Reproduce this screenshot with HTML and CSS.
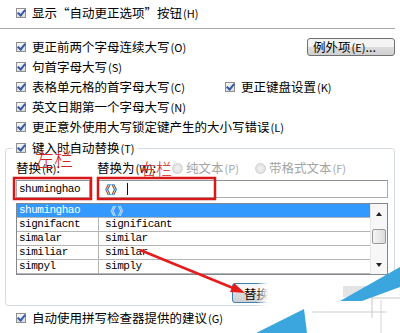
FILE: index.html
```html
<!DOCTYPE html>
<html lang="zh-CN">
<head>
  <meta charset="UTF-8">
  <title>自动更正</title>
  <link rel="stylesheet" href="styles.css">
</head>
<body>

  <div class="dlg">
    <label class="chk row first"><span class="box"></span>显示“自动更正选项”按钮<span class="key">(H)</span></label>
    <div class="sep"></div>

    <div class="row">
      <label class="chk"><span class="box"></span>更正前两个字母连续大写<span class="key">(O)</span></label>
      <button class="btn exc">例外项<span class="key">(E)</span>...</button>
    </div>
    <label class="chk row"><span class="box"></span>句首字母大写<span class="key">(S)</span></label>
    <div class="row">
      <label class="chk col-a"><span class="box"></span>表格单元格的首字母大写<span class="key">(C)</span></label>
      <label class="chk"><span class="box"></span>更正键盘设置<span class="key">(K)</span></label>
    </div>
    <label class="chk row"><span class="box"></span>英文日期第一个字母大写<span class="key">(N)</span></label>
    <label class="chk row"><span class="box"></span>更正意外使用大写锁定键产生的大小写错误<span class="key">(L)</span></label>

    <div class="grp">
      <label class="chk grp-title"><span class="box"></span>键入时自动替换<span class="key">(T)</span></label>

      <div class="labels">
        <span class="lbl-a">替换<span class="key">(R)</span>:</span>
        <span class="lbl-b">替换为<span class="key">(W)</span>:</span>
        <span class="radio"></span><span class="dim">纯文本<span class="key">(P)</span></span>
        <span class="radio r2"></span><span class="dim">带格式文本<span class="key">(F)</span></span>
      </div>

      <div class="inputs">
        <div class="field f1">shuminghao</div>
        <div class="field f2">《》<span class="caret"></span></div>
      </div>

      <div class="list">
        <div class="rows">
          <div class="item sel"><span class="c1">shuminghao</span><span class="c2 cjk">《 》</span></div>
          <div class="item"><span class="c1">signifacnt</span><span class="c2">significant</span></div>
          <div class="item"><span class="c1">simalar</span><span class="c2">similar</span></div>
          <div class="item"><span class="c1">similiar</span><span class="c2">similar</span></div>
          <div class="item"><span class="c1">simpyl</span><span class="c2">simply</span></div>
        </div>
        <div class="sbar">
          <span class="arr up"></span>
          <span class="thumb"></span>
          <span class="arr dn"></span>
        </div>
      </div>

      <div class="btn-row">
        <button class="btn def">替换</button>
      </div>
    </div>

    <label class="chk row last"><span class="box"></span>自动使用拼写检查器提供的建议<span class="key">(G)</span></label>
  </div>

  <!-- 标注 -->
  <span class="note n1">左栏</span>
  <span class="note n2">右栏</span>
  <svg class="overlay" width="400" height="333" viewBox="0 0 400 333">
    <defs>
      <linearGradient id="fade" x1="0" x2="1" y1="0" y2="0">
        <stop offset="0" stop-color="#fff" stop-opacity="0"/>
        <stop offset="1" stop-color="#fff"/>
      </linearGradient>
    </defs>
    <rect x="14" y="178" width="77" height="21" fill="none" stroke="#d81818" stroke-width="2.5"/>
    <rect x="98" y="178" width="117" height="21" fill="none" stroke="#d81818" stroke-width="2.5"/>
    <line x1="140" y1="250" x2="233" y2="288" stroke="#e41c1c" stroke-width="2.5"/>
    <polygon points="245,293 230,292 234,283" fill="#e41c1c"/>

    <!-- 右下角水印碎片 -->
    <rect x="256" y="279" width="12" height="29" fill="url(#fade)"/>
    <rect x="268" y="279" width="132" height="29" fill="#fff"/>
    <rect x="292" y="306" width="108" height="27" fill="#fff"/>
    <rect x="343" y="286" width="28" height="11" fill="#e4e4e4"/>
    <line x1="372" y1="290" x2="372" y2="318" stroke="#c8c8c8"/>
    <line x1="372" y1="298" x2="400" y2="298" stroke="#c8c8c8"/>
    <line x1="312" y1="312" x2="387" y2="312" stroke="#cfcfcf"/>
    <line x1="381" y1="300" x2="381" y2="333" stroke="#d6d6d6"/>
    <polygon points="340,301 400,267 400,287 362,301" fill="#3ba6de"/>
    <polygon points="256,333 304,309 307,333" fill="#3ba6de"/>
  </svg>

</body>
</html>
```

FILE: styles.css
```css
* {
  margin: 0;
  padding: 0;
  box-sizing: border-box;
}

body {
  width: 400px;
  height: 333px;
  overflow: hidden;
  position: relative;
  background: #fff;
  font-family: "Noto Sans CJK SC", sans-serif;
  font-size: 12.5px;
  color: #000;
}

.chk {
  display: flex;
  align-items: center;
  height: 20px;
  line-height: 20px;
  white-space: nowrap;
}

.key {
  font-size: 11px;
  margin-left: 1px;
}

.box {
  width: 10px;
  height: 10px;
  flex: none;
  margin-right: 6px;
  border: 1px solid #8e8f8f;
  background: linear-gradient(#f6f6f6, #dcdcdc);
  display: flex;
  justify-content: center;
  align-items: center;
}

.box::after {
  content: "";
  width: 3px;
  height: 6px;
  margin-top: -2px;
  border: solid #3358a8;
  border-width: 0 2px 2px 0;
  transform: rotate(40deg);
}

.row {
  display: flex;
  align-items: center;
  height: 20px;
  padding-left: 16px;
}

.first {
  margin-top: 3px;
}

.sep {
  margin: 5px 5px 7px 0;
  border-top: 1px solid #a8a8a8;
  border-bottom: 1px solid #fff;
}

.col-a {
  width: 209px;
}

.btn {
  font-family: inherit;
  font-size: 12.5px;
  color: #000;
  border: 1px solid #707070;
  border-radius: 3px;
  background: linear-gradient(#f4f4f4 50%, #dddddd 50%, #cfcfcf);
}

.exc {
  margin-left: auto;
  margin-right: 5px;
  width: 88px;
  height: 18px;
  line-height: 16px;
  text-align: left;
  padding-left: 5px;
}

/* 键入时自动替换 */
.grp {
  margin: 11px 5px 0 5px;
  border: 1px solid #d5dde3;
  border-radius: 3px;
  padding: 0 6px 2px 10px;
  height: 158px;
}

.grp-title {
  width: fit-content;
  margin: -11px 0 0 -3px;
  padding: 0 3px;
  background: #fff;
}

.labels {
  display: flex;
  align-items: center;
  height: 16px;
  line-height: 16px;
  margin-top: 2px;
  white-space: nowrap;
}

.lbl-a {
  width: 81px;
}

.lbl-b {
  width: 75px;
}

.radio {
  width: 11px;
  height: 11px;
  border-radius: 50%;
  border: 1px solid #cfcfcf;
  background: radial-gradient(#f2f2f2, #dadada);
  margin-right: 3px;
}

.r2 {
  margin-left: 16px;
}

.dim {
  color: #a4a4a4;
}

.inputs {
  display: flex;
  gap: 7px;
  height: 18px;
  margin-top: 4px;
}

.field {
  height: 18px;
  border: 1px solid #abadb3;
  border-top-color: #8f939c;
  display: flex;
  align-items: center;
}

.f1 {
  width: 74px;
  padding-left: 2px;
  font-family: "Liberation Mono", monospace;
  font-size: 11px;
  letter-spacing: -0.5px;
}

.f2 {
  flex: 1;
  padding-left: 1px;
  font-size: 12px;
}

.caret {
  width: 1px;
  height: 12px;
  background: #111;
  margin-left: 4px;
}

.list {
  display: flex;
  height: 72px;
  margin-top: 5px;
  border: 1px solid #828790;
  overflow: hidden;
}

.rows {
  flex: 1;
  font-family: "Liberation Mono", monospace;
  font-size: 11px;
  letter-spacing: -0.5px;
}

.item {
  display: flex;
  height: 14px;
  line-height: 13px;
  border-bottom: 1px solid #b4b4b4;
}

.c1 {
  width: 81px;
  padding-left: 2px;
}

.c2 {
  flex: 1;
  padding-left: 6px;
  border-left: 1px solid #b4b4b4;
}

.sel {
  background: #3399ff;
  color: #fff;
}

.sel .c2 {
  border-left-color: #3399ff;
}

.cjk {
  font-family: "Noto Sans CJK SC", sans-serif;
  font-size: 11px;
}

.sbar {
  width: 17px;
  border-left: 1px solid #e6e6e6;
  background: #f7f7f7;
  display: flex;
  flex-direction: column;
  align-items: center;
}

.arr {
  width: 0;
  height: 0;
  border-left: 3px solid transparent;
  border-right: 3px solid transparent;
}

.up {
  margin-top: 8px;
  border-bottom: 4px solid #222;
}

.thumb {
  width: 14px;
  height: 15px;
  margin-top: 13px;
  border: 1px solid #999;
  border-radius: 2px;
  background: linear-gradient(90deg, #f4f4f4, #dcdcdc);
}

.dn {
  margin-top: 19px;
  border-top: 4px solid #222;
}

.btn-row {
  display: flex;
  height: 20px;
  margin-top: 8px;
}

.def {
  margin-left: 216px;
  width: 76px;
  height: 20px;
  border-color: #3c7fb1;
  text-align: left;
  padding-left: 11px;
}

.last {
  margin-top: 2px;
}

/* 标注层 */
.overlay {
  position: absolute;
  left: 0;
  top: 0;
  pointer-events: none;
}

.note {
  position: absolute;
  color: #d42222;
  font-weight: 300;
  line-height: 1;
}

.n1 {
  left: 35px;
  top: 149px;
  font-size: 19px;
}

.n2 {
  left: 140px;
  top: 160px;
  font-size: 16px;
}
```
